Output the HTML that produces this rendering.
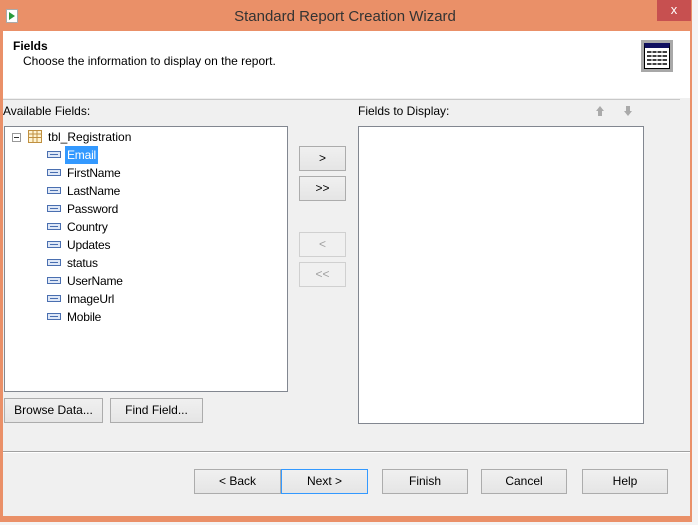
<!DOCTYPE html><html><head><style>
*{margin:0;padding:0;box-sizing:border-box}
body{width:698px;height:525px;background:#f0f0f0;font-family:"Liberation Sans",sans-serif;font-size:12px;color:#000;position:relative;overflow:hidden}
.a{position:absolute}
.btn{position:absolute;background:linear-gradient(#f0f0f0,#e5e5e5);border:1px solid #acacac;text-align:center;font-size:12px}
.dis{color:#a0a0a0;border-color:#d0d0d0;background:#f0f0f0}
.row{position:absolute;left:47px;height:18px;line-height:18px}
.fi{position:absolute;left:0;top:5px;width:14px;height:7px;border:1px solid #4a6fb0;background:#dfe8f7}
.fi:after{content:"";position:absolute;left:2px;top:2px;width:8px;height:1px;background:#4a6fb0}
.row span{position:absolute;left:18px;padding:0 2px;white-space:nowrap;letter-spacing:-0.2px}
</style></head><body>
<div class="a" style="left:0;top:0;width:698px;height:522px;background:#ea9068"></div>
<div class="a" style="left:692px;top:0;width:6px;height:525px;background:#f4f4f4"></div>
<div class="a" style="left:0;top:522px;width:698px;height:3px;background:#f4f4f4"></div>
<div class="a" style="left:6px;top:9px;width:12px;height:14px;background:#fff;border:1px solid #aaa"></div>
<div class="a" style="left:9px;top:12px;width:0;height:0;border-left:6px solid #2a9a3a;border-top:4px solid transparent;border-bottom:4px solid transparent"></div>
<div class="a" style="left:0;top:8px;width:690px;text-align:center;font-size:15px;color:#333">Standard Report Creation Wizard</div>
<div class="a" style="left:657px;top:0;width:34px;height:21px;background:#c75050;color:#fff;text-align:center;line-height:20px;font-size:13px">x</div>
<div class="a" style="left:3px;top:31px;width:687px;height:485px;background:#f0f0f0"></div>
<div class="a" style="left:3px;top:31px;width:687px;height:67px;background:#fff"></div>
<div class="a" style="left:3px;top:99px;width:677px;height:1px;background:#c8c8c8"></div>
<div class="a" style="left:13px;top:39px;font-weight:bold">Fields</div>
<div class="a" style="left:23px;top:54px">Choose the information to display on the report.</div>
<div class="a" style="left:641px;top:40px;width:32px;height:32px;background:#a8a8a8"></div>
<div class="a" style="left:644px;top:43px;width:26px;height:26px;background:#fff;border:1px solid #000;border-top:5px solid #101060"></div>
<svg class="a" style="left:647px;top:50px" width="20" height="16"><g stroke="#000" stroke-width="1.5"><path d="M0 2h20M0 6h20M0 10h20M0 14h20"/></g><g stroke="#fff" stroke-width="1"><path d="M5 0v16M10 0v16M15 0v16"/></g></svg>
<div class="a" style="left:3px;top:104px">Available Fields:</div>
<div class="a" style="left:358px;top:104px">Fields to Display:</div>
<svg class="a" style="left:595px;top:105px" width="40" height="12"><path d="M5 1l4 5h-2v5h-4v-5h-2z" fill="#aaa"/><path d="M33 11l4-5h-2v-5h-4v5h-2z" fill="#aaa"/></svg>
<div class="a" style="left:4px;top:126px;width:284px;height:266px;background:#fff;border:1px solid #828790"></div>
<div class="a" style="left:358px;top:126px;width:286px;height:298px;background:#fff;border:1px solid #828790"></div>
<div class="a" style="left:12px;top:133px;width:9px;height:9px;border:1px solid #999;background:#fff"></div>
<div class="a" style="left:14px;top:137px;width:5px;height:1px;background:#333"></div>
<svg class="a" style="left:28px;top:130px" width="14" height="13"><rect x=".5" y=".5" width="13" height="12" fill="#fff3d0" stroke="#c09040"/><path d="M.5 4h13M.5 7.5h13M5 .5v12M9 .5v12" stroke="#c09040"/></svg>
<div class="a" style="left:48px;top:130px">tbl_Registration</div>
<div class="row" style="top:146px"><i class="fi"></i><span style="background:#3399ff;color:#fff">Email</span></div>
<div class="row" style="top:164px"><i class="fi"></i><span>FirstName</span></div>
<div class="row" style="top:182px"><i class="fi"></i><span>LastName</span></div>
<div class="row" style="top:200px"><i class="fi"></i><span>Password</span></div>
<div class="row" style="top:218px"><i class="fi"></i><span>Country</span></div>
<div class="row" style="top:236px"><i class="fi"></i><span>Updates</span></div>
<div class="row" style="top:254px"><i class="fi"></i><span>status</span></div>
<div class="row" style="top:272px"><i class="fi"></i><span>UserName</span></div>
<div class="row" style="top:290px"><i class="fi"></i><span>ImageUrl</span></div>
<div class="row" style="top:308px"><i class="fi"></i><span>Mobile</span></div>
<div class="btn" style="left:299px;top:146px;width:47px;height:25px;line-height:23px">&gt;</div>
<div class="btn" style="left:299px;top:176px;width:47px;height:25px;line-height:23px">&gt;&gt;</div>
<div class="btn dis" style="left:299px;top:232px;width:47px;height:25px;line-height:23px">&lt;</div>
<div class="btn dis" style="left:299px;top:262px;width:47px;height:25px;line-height:23px">&lt;&lt;</div>
<div class="btn" style="left:4px;top:398px;width:99px;height:25px;line-height:23px">Browse Data...</div>
<div class="btn" style="left:110px;top:398px;width:93px;height:25px;line-height:23px">Find Field...</div>
<div class="a" style="left:3px;top:451px;width:687px;height:1px;background:#a0a0a0"></div>
<div class="a" style="left:3px;top:452px;width:687px;height:1px;background:#fff"></div>
<div class="btn" style="left:194px;top:469px;width:87px;height:25px;line-height:23px">&lt; Back</div>
<div class="btn" style="left:281px;top:469px;width:87px;height:25px;line-height:23px;border-color:#3399ff">Next &gt;</div>
<div class="btn" style="left:382px;top:469px;width:86px;height:25px;line-height:23px">Finish</div>
<div class="btn" style="left:481px;top:469px;width:86px;height:25px;line-height:23px">Cancel</div>
<div class="btn" style="left:582px;top:469px;width:86px;height:25px;line-height:23px">Help</div>
</body></html>
